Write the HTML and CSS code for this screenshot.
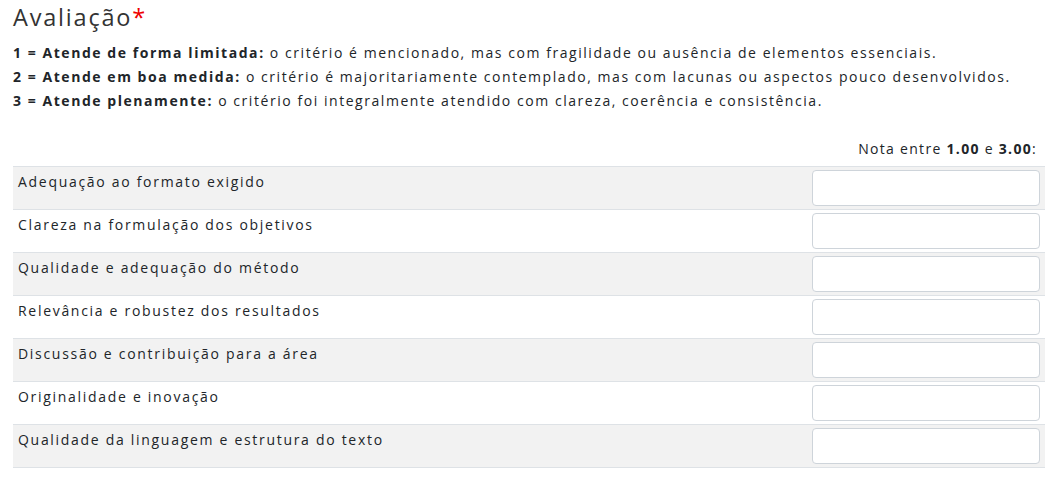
FILE: index.html
```html
<!DOCTYPE html>
<html lang="pt">
<head>
<meta charset="utf-8">
<link rel="stylesheet" href="styles.css">
</head>
<body>
<div class="wrap">
  <h3 class="title">Avaliação<span class="req">*</span></h3>
  <div class="legend">
    <p><b>1 = Atende de forma limitada:</b> o critério é mencionado, mas com fragilidade ou ausência de elementos essenciais.</p>
    <p><b>2 = Atende em boa medida:</b> o critério é majoritariamente contemplado, mas com lacunas ou aspectos pouco desenvolvidos.</p>
    <p><b>3 = Atende plenamente:</b> o critério foi integralmente atendido com clareza, coerência e consistência.</p>
  </div>
  <div class="range">Nota entre <b>1.00</b> e <b>3.00</b>:</div>
  <div class="table">
    <div class="row odd"><div class="label">Adequação ao formato exigido</div><input class="field" type="text"></div>
    <div class="row"><div class="label">Clareza na formulação dos objetivos</div><input class="field" type="text"></div>
    <div class="row odd"><div class="label">Qualidade e adequação do método</div><input class="field" type="text"></div>
    <div class="row"><div class="label">Relevância e robustez dos resultados</div><input class="field" type="text"></div>
    <div class="row odd"><div class="label">Discussão e contribuição para a área</div><input class="field" type="text"></div>
    <div class="row"><div class="label">Originalidade e inovação</div><input class="field" type="text"></div>
    <div class="row odd"><div class="label">Qualidade da linguagem e estrutura do texto</div><input class="field" type="text"></div>
  </div>
</div>
</body>
</html>
```
FILE: styles.css
```css
* { box-sizing: border-box; }
body {
  margin: 0;
  font-family: "Open Sans", sans-serif;
  color: #212529;
  background: #fff;
}
.wrap { padding: 0 3px 0 13px; }
.title {
  margin: 0;
  padding-top: 3px;
  font-size: 23.5px;
  font-weight: 400;
  line-height: 29px;
  letter-spacing: 1.8px;
  color: #333;
}
.req { color: #e00; letter-spacing: 0; }
.legend { margin-top: 9px; font-size: 14px; line-height: 24px; letter-spacing: 1.55px; }
.legend p { margin: 0; }
.legend b { font-weight: 700; }
.range {
  margin-top: 24px;
  margin-bottom: 5px;
  text-align: right;
  font-size: 14px;
  line-height: 24px;
  letter-spacing: 1.3px;
  padding-right: 8px;
}
.range b { font-weight: 700; }
.table { border-bottom: 1px solid #dee2e6; }
.row {
  display: flex;
  justify-content: space-between;
  align-items: flex-start;
  height: 43px;
  border-top: 1px solid #dee2e6;
  padding: 3px 5px 0 5px;
  font-size: 14px;
  letter-spacing: 1.7px;
}
.row.odd { background: #f2f2f2; }
.label { padding-top: 2px; line-height: 20px; }
.field {
  width: 228px;
  height: 36px;
  border: 1px solid #ced4da;
  border-radius: 4px;
  background: #fff;
  margin: 0;
}
```
